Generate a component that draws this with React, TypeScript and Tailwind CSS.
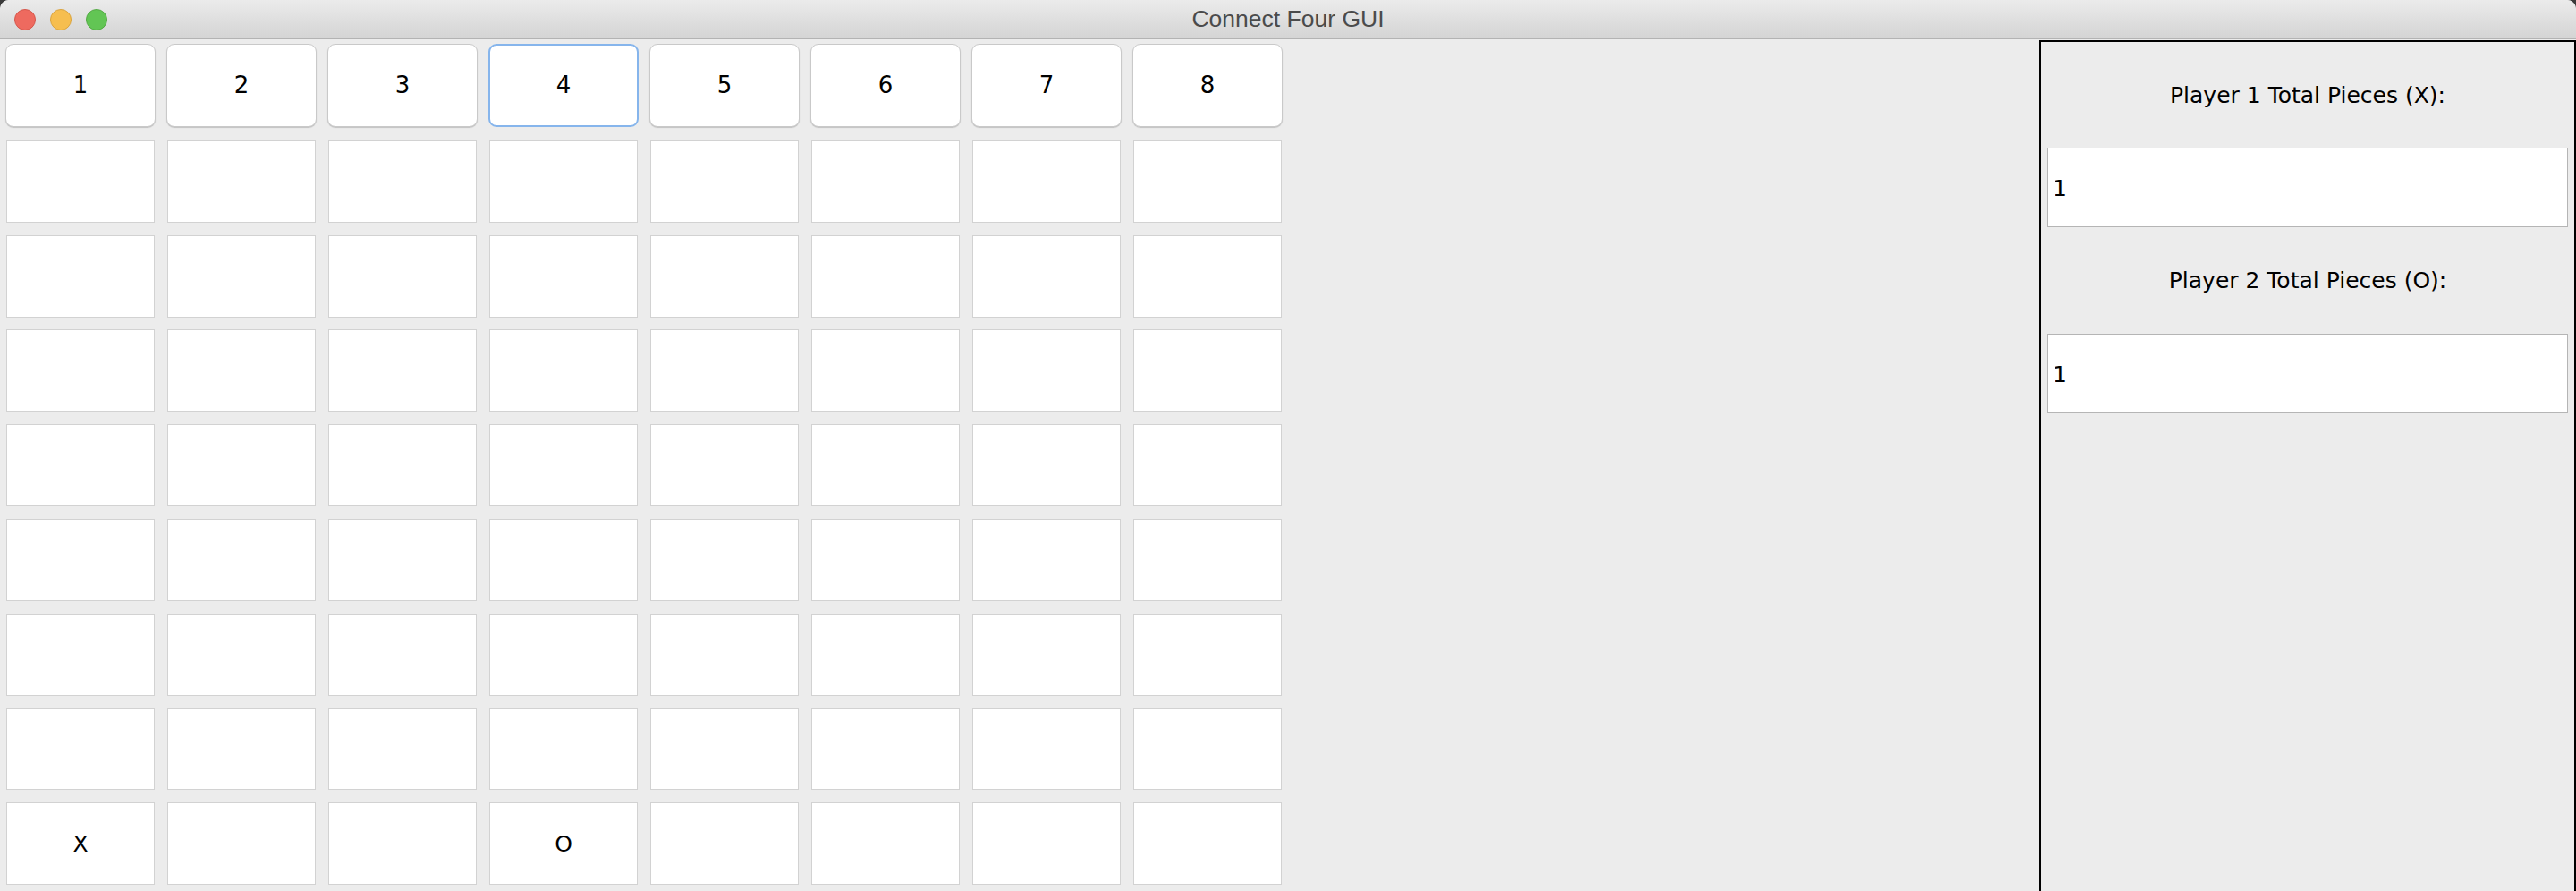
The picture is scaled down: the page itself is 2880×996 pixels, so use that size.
import React from 'react';

const COLS = [1, 2, 3, 4, 5, 6, 7, 8];
const ROWS = 8;

// bottom row holds the two pieces placed so far
const pieceAt = (row: number, col: number): string => {
  if (row !== ROWS - 1) return '';
  if (col === 0) return 'X';
  if (col === 3) return 'O';
  return '';
};

const swingFont = { fontFamily: '"DejaVu Sans", "Open Sans", sans-serif' };

export default function App() {
  return (
    <div className="w-[2880px] h-[996px] bg-[#3a3a3a] overflow-hidden">
      <div className="w-full h-full rounded-t-[10px] overflow-hidden bg-[#ececec] flex flex-col">
        {/* title bar */}
        <div className="h-[44px] shrink-0 relative flex items-center justify-center bg-gradient-to-b from-[#ebebeb] to-[#d4d4d4] border-b border-[#b3b3b3]">
          <div className="absolute left-[16px] top-[10px] flex gap-[16px]">
            <span className="w-[24px] h-[24px] rounded-full bg-[#ee6a5f] border border-[#d4574c]" />
            <span className="w-[24px] h-[24px] rounded-full bg-[#f6be4f] border border-[#d9a440]" />
            <span className="w-[24px] h-[24px] rounded-full bg-[#62c554] border border-[#54a945]" />
          </div>
          <span
            className="text-[26.5px] text-[#4b4b4b] leading-none"
            style={{ fontFamily: '"Liberation Sans", Arial, sans-serif' }}
          >
            Connect Four GUI
          </span>
        </div>

        <div className="flex-1 flex min-h-0" style={swingFont}>
          {/* board */}
          <div className="w-[1440px] shrink-0 flex flex-col">
            <div className="grid grid-cols-8 h-[106px]">
              {COLS.map((n) => (
                <div key={n} className="px-[6px] pt-[5px]">
                  <button
                    className={
                      n === 4
                        ? 'w-full h-[93px] bg-white rounded-[9px] border-2 border-[#86b5ec] text-[26px] text-black'
                        : 'w-full h-[93px] bg-white rounded-[9px] border border-[#c9c9c9] shadow-[0_1px_1px_rgba(0,0,0,0.18)] text-[26px] text-black'
                    }
                  >
                    {n}
                  </button>
                </div>
              ))}
            </div>
            {Array.from({ length: ROWS }).map((_, r) => (
              <div key={r} className="grid grid-cols-8 h-[106px]">
                {COLS.map((_, c) => (
                  <div key={c} className="px-[7px] pt-[7px]">
                    <div className="h-[92px] bg-white border border-[#d2d2d2] flex items-center justify-center text-[25px] text-black">
                      {pieceAt(r, c)}
                    </div>
                  </div>
                ))}
              </div>
            ))}
          </div>

          <div className="flex-1" />

          {/* score panel */}
          <div className="w-[600px] shrink-0 mt-[1px] border-2 border-b-0 border-black flex flex-col px-[7px] text-black">
            <div className="mt-[45px] h-[30px] flex items-center justify-center text-[25px]">
              Player 1 Total Pieces (X):
            </div>
            <div className="mt-[43px] h-[89px] bg-white border border-[#b5b5b5] flex items-center pl-[5px] pt-[2px] text-[25px]">
              1
            </div>
            <div className="mt-[45px] h-[30px] flex items-center justify-center text-[25px]">
              Player 2 Total Pieces (O):
            </div>
            <div className="mt-[44px] h-[89px] bg-white border border-[#b5b5b5] flex items-center pl-[5px] pt-[2px] text-[25px]">
              1
            </div>
          </div>
        </div>
      </div>
    </div>
  );
}
